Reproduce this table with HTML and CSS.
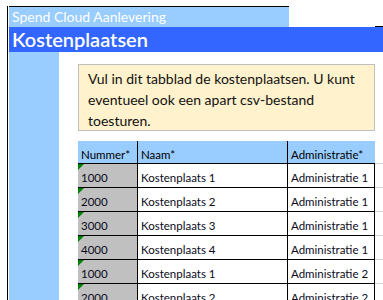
FILE: index.html
```html
<!DOCTYPE html>
<html lang="nl">
<head>
<meta charset="utf-8">
<link rel="stylesheet" href="styles.css">
</head>
<body>
<div class="sheet">
  <div class="top-row">
    <div class="app-title">Spend Cloud Aanlevering</div>
    <div class="top-fill"></div>
  </div>
  <div class="title-bar">Kostenplaatsen</div>
  <div class="body">
    <div class="side"></div>
    <div class="content">
      <div class="note">Vul in dit tabblad de kostenplaatsen. U kunt eventueel ook een apart csv-bestand toesturen.</div>
      <div class="grid">
        <div class="h c1">Nummer*</div>
        <div class="h c2">Naam*</div>
        <div class="h c3">Administratie*</div>
        <div class="h c4"></div>

        <div class="d c1 num">1000</div><div class="d c2">Kostenplaats 1</div><div class="d c3">Administratie 1</div><div class="d c4"></div>
        <div class="d c1 num">2000</div><div class="d c2">Kostenplaats 2</div><div class="d c3">Administratie 1</div><div class="d c4"></div>
        <div class="d c1 num">3000</div><div class="d c2">Kostenplaats 3</div><div class="d c3">Administratie 1</div><div class="d c4"></div>
        <div class="d c1 num">4000</div><div class="d c2">Kostenplaats 4</div><div class="d c3">Administratie 1</div><div class="d c4"></div>
        <div class="d c1 num">1000</div><div class="d c2">Kostenplaats 1</div><div class="d c3">Administratie 2</div><div class="d c4"></div>
        <div class="d c1 num">2000</div><div class="d c2">Kostenplaats 2</div><div class="d c3">Administratie 2</div><div class="d c4"></div>
      </div>
    </div>
  </div>
</div>
</body>
</html>
```

FILE: styles.css
```css
html, body {
  margin: 0;
  padding: 0;
  background: #ffffff;
  overflow: hidden;
}
body {
  font-family: Lato, "Open Sans", sans-serif;
  color: #000;
}
.sheet {
  margin: 6px 0 0 7px;
  border-left: 1px solid #000;
  padding-left: 1px;
  height: 294px;
}
.top-row {
  display: flex;
  height: 21px;
}
.app-title {
  width: 280px;
  border-top: 1px solid #000;
  background: #99ccff;
  color: #ffffff;
  font-size: 14px;
  line-height: 20px;
  padding-left: 3px;
  box-sizing: border-box;
}
.top-fill {
  flex: 1;
  display: flex;
  justify-content: flex-end;
  align-items: flex-end;
}
.top-fill::after {
  content: "";
  width: 8px;
  height: 1px;
  background: #000;
}
.title-bar {
  height: 25px;
  background: #3366ff;
  color: #ffffff;
  font-size: 20px;
  font-weight: 600;
  line-height: 25px;
  padding-left: 3px;
}
.body {
  display: flex;
  height: 260px;
}
.side {
  width: 51px;
  background: #99ccff;
}
.content {
  flex: 1;
  padding: 12px 0 0 19px;
}
.note {
  width: 297px;
  height: 67px;
  box-sizing: border-box;
  background: #fff2cc;
  border: 1px solid #bfbfbf;
  padding: 3px 10px 0 9px;
  font-size: 14px;
  line-height: 21px;
  color: #111;
}
.grid {
  margin-top: 10px;
  display: grid;
  grid-template-columns: 60px 150px 87px 8px;
  grid-auto-rows: 24px;
  grid-template-rows: 22px;
  font-size: 11.5px;
}
.h {
  background: #99ccff;
  padding: 0 0 2px 3px;
  display: flex;
  align-items: flex-end;
  box-sizing: border-box;
  white-space: nowrap;
}
.h.c1, .h.c2 {
  border-right: 1px solid #000;
}
.h.c4 {
  background: transparent;
}
.d {
  border-top: 1px solid #000;
  border-right: 1px solid #000;
  padding: 0 0 3px 3px;
  display: flex;
  align-items: flex-end;
  box-sizing: border-box;
  position: relative;
  color: #0a0a1a;
  white-space: nowrap;
}
.d.c4 {
  border-top: 1px solid #d4d4d4;
  border-right: none;
}
.num {
  background: #c0c0c0;
}
.num::before {
  content: "";
  position: absolute;
  left: 0;
  top: 0;
  border-top: 6px solid #008000;
  border-right: 6px solid transparent;
}
```
